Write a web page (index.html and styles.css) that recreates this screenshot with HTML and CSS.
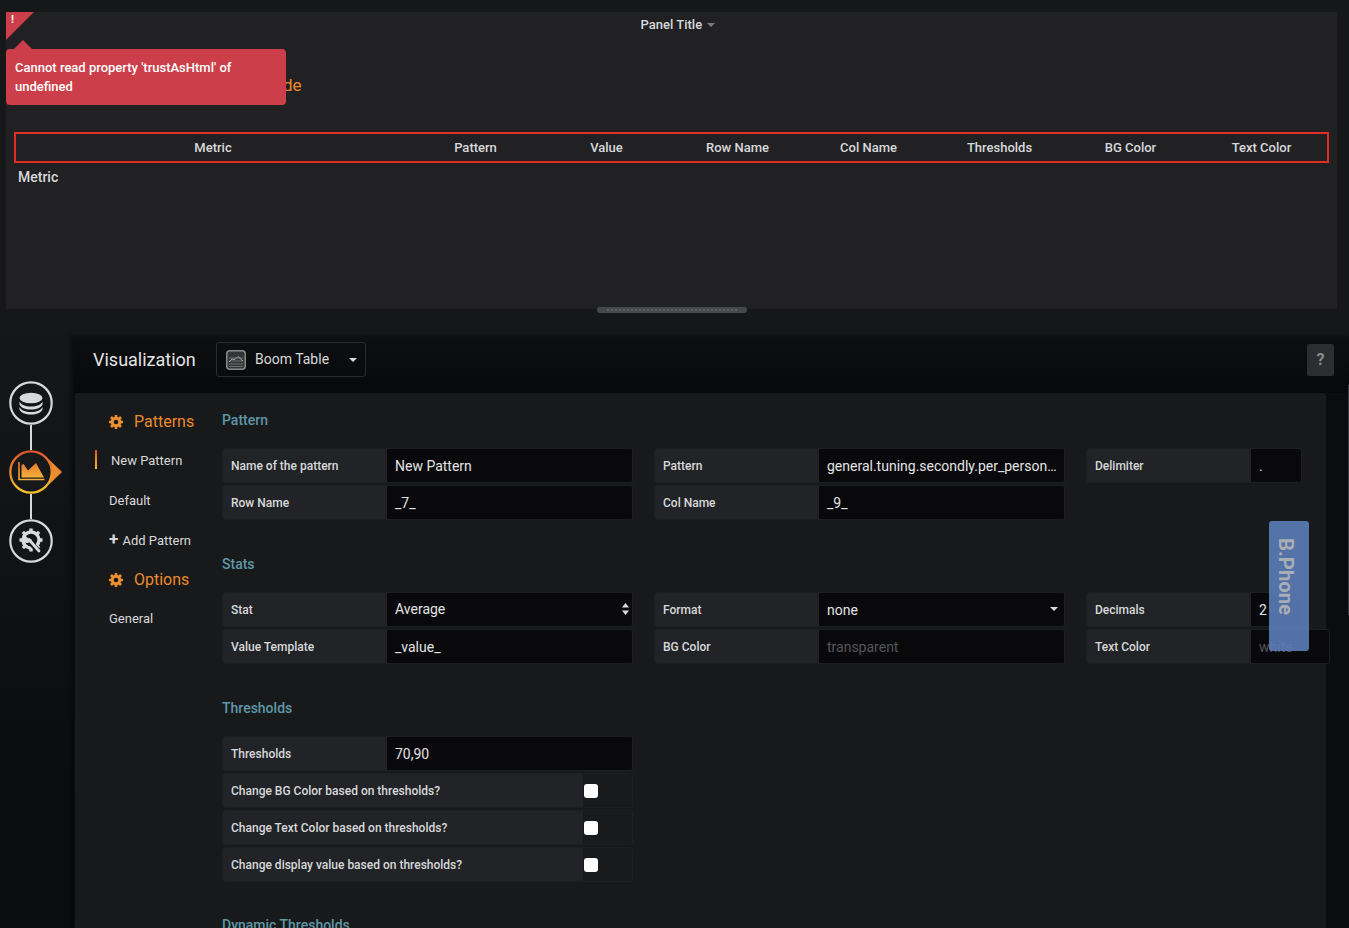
FILE: index.html
```html
<!DOCTYPE html>
<html lang="en">
<head>
<meta charset="utf-8">
<title>Boom Table</title>
<link rel="stylesheet" href="styles.css">
</head>
<body>
<div class="page">
  <section class="panel">
    <div class="corner"><span>!</span></div>
    <div class="tip">Cannot read property 'trustAsHtml' of undefined</div>
    <header class="panel-title">Panel Title <i class="caret"></i></header>
    <div class="hidden-head">de</div>
    <div class="thead">
      <div>Metric</div><div>Pattern</div><div>Value</div><div>Row Name</div><div>Col Name</div><div>Thresholds</div><div>BG Color</div><div>Text Color</div>
    </div>
    <div class="metric">Metric</div>
  </section>
  <div class="handle"></div>

  <div class="editor">
    <aside class="rail">
      <div class="step">
        <svg width="44" height="44" viewBox="0 0 44 44"><circle cx="22" cy="22" r="20.7" fill="#141517" stroke="#d8d9da" stroke-width="2.2"/><ellipse cx="22" cy="17" rx="11.5" ry="5.3" fill="#d8d9da"/><path d="M10.5 20.500c1 3 6 5 11.500 5s10.500-2 11.500-5v3c-1 3-6 5-11.500 5s-10.500-2-11.500-5zM10.500 26c1 3 6 5 11.500 5s10.500-2 11.500-5v2.500c-1 3-6 5-11.500 5s-10.500-2-11.500-5z" fill="#d8d9da"/></svg>
      </div>
      <i class="link"></i>
      <div class="step">
        <svg width="54" height="44" viewBox="0 0 54 44">
          <defs>
            <linearGradient id="ring" x1="0" y1="0" x2="0" y2="1"><stop offset="0" stop-color="#e0562a"/><stop offset="1" stop-color="#f5c32c"/></linearGradient>
            <linearGradient id="fill" x1="0" y1="0" x2="0" y2="1"><stop offset="0" stop-color="#e9792e"/><stop offset="1" stop-color="#f3b03a"/></linearGradient>
          </defs>
          <path d="M40 9.500L53 22 40 34.500z" fill="#ec8b2f"/>
          <circle cx="22" cy="22" r="20.700" fill="#17181a" stroke="url(#ring)" stroke-width="2.200"/>
          <path d="M10 12v17.500h25.500" fill="none" stroke="url(#fill)" stroke-width="1.600"/>
          <path d="M12.500 27.500V15l2-1 4.500 6.500 8-7.500 8 14.500z" fill="url(#fill)"/>
        </svg>
      </div>
      <i class="link"></i>
      <div class="step">
        <svg width="44" height="44" viewBox="0 0 44 44"><circle cx="22" cy="22" r="20.700" fill="#141517" stroke="#d8d9da" stroke-width="2.200"/><path d="M22 9.500v23M10.500 21h23M13.900 12.900l16.200 16.200M30.100 12.900L13.900 29.100" stroke="#d8d9da" stroke-width="3.400"/><circle cx="22" cy="21" r="8" fill="#141517" stroke="#d8d9da" stroke-width="3.400"/><path d="M21 23l12 13" stroke="#141517" stroke-width="5.500"/><path d="M20 20.500l10 11.500" stroke="#d8d9da" stroke-width="2.800" stroke-linecap="round"/><path d="M16.500 14.200a5 5 0 1 0 6.300 6.300l-3.300-.7-2.300-2.300z" fill="#d8d9da"/></svg>
      </div>
    </aside>

    <main class="work">
      <header class="viz-bar">
        <h1>Visualization</h1>
        <div class="viz-pick">
          <svg width="20" height="20" viewBox="0 0 20 20"><rect x=".75" y=".75" width="18.500" height="18.500" rx="3" fill="#333436" stroke="#8a8a8a" stroke-width="1.500"/><path d="M3 8h14M3 11h14M3 14h14M3 16.500h14" stroke="#6e6e6e" stroke-width="1"/><path d="M3 12l3-3 3 .5 3-3 5 4.500" fill="none" stroke="#a8a8a8" stroke-width="1"/></svg>
          <span>Boom Table</span>
          <i class="caret caret-light"></i>
        </div>
        <button class="help" type="button">?</button>
      </header>

      <div class="card">
        <nav class="side">
          <div class="side-head"><svg class="cog" width="14" height="14" viewBox="0 0 14 14"><path d="M7 0v14M0 7h14M2 2l10 10M12 2L2 12" stroke="#ec8f30" stroke-width="2.600"/><circle cx="7" cy="7" r="3.800" fill="#18191b" stroke="#ec8f30" stroke-width="3"/></svg>Patterns</div>
          <div class="side-item side-on">New Pattern</div>
          <div class="side-item">Default</div>
          <div class="side-item"><b class="plus">+</b> Add Pattern</div>
          <div class="side-head side-head-2"><svg class="cog" width="14" height="14" viewBox="0 0 14 14"><path d="M7 0v14M0 7h14M2 2l10 10M12 2L2 12" stroke="#ec8f30" stroke-width="2.600"/><circle cx="7" cy="7" r="3.800" fill="#18191b" stroke="#ec8f30" stroke-width="3"/></svg>Options</div>
          <div class="side-item">General</div>
        </nav>

        <div class="forms">
          <section class="group">
            <h2>Pattern</h2>
            <div class="row">
              <div class="fld"><label>Name of the pattern</label><div class="val">New Pattern</div></div>
              <div class="fld"><label>Pattern</label><div class="val">general.tuning.secondly.per_person_throughput</div></div>
              <div class="fld"><label>Delimiter</label><div class="val narrow">.</div></div>
            </div>
            <div class="row">
              <div class="fld"><label>Row Name</label><div class="val">_7_</div></div>
              <div class="fld"><label>Col Name</label><div class="val">_9_</div></div>
            </div>
          </section>

          <section class="group">
            <h2>Stats</h2>
            <div class="row">
              <div class="fld"><label>Stat</label><div class="val val-sel val-native">Average<svg class="updown" width="7" height="12" viewBox="0 0 7 12"><path d="M3.500 0L7 4.500H0zM3.500 12L0 7.500h7z" fill="#d8d9da"/></svg></div></div>
              <div class="fld"><label>Format</label><div class="val val-sel">none<i class="caret caret-sm"></i></div></div>
              <div class="fld"><label>Decimals</label><div class="val narrow">2</div></div>
            </div>
            <div class="row">
              <div class="fld"><label>Value Template</label><div class="val">_value_</div></div>
              <div class="fld"><label>BG Color</label><div class="val ph">transparent</div></div>
              <div class="fld"><label>Text Color</label><div class="val tc ph">white</div></div>
            </div>
          </section>

          <section class="group group-tall">
            <h2>Thresholds</h2>
            <div class="row">
              <div class="fld"><label>Thresholds</label><div class="val">70,90</div></div>
            </div>
            <div class="row"><div class="fld chk"><label>Change BG Color based on thresholds?</label><div class="box"><i></i></div></div></div>
            <div class="row"><div class="fld chk"><label>Change Text Color based on thresholds?</label><div class="box"><i></i></div></div></div>
            <div class="row"><div class="fld chk"><label>Change display value based on thresholds?</label><div class="box"><i></i></div></div></div>
          </section>

          <section class="group">
            <h2>Dynamic Thresholds</h2>
          </section>
        </div>
      </div>
    </main>
  </div>
  <div class="scroll"></div>
  <div class="bphone"><span>B.Phone</span></div>
</div>
</body>
</html>
```
FILE: styles.css
```css
* { box-sizing: border-box; }
html, body { margin: 0; height: 100%; overflow: hidden; }
body { background: #161719; color: #d8d9da; font: 400 14px Roboto, "Liberation Sans", sans-serif; }
.page { position: relative; height: 928px; overflow: hidden; padding-top: 12px; background: linear-gradient(#161719 0, #161719 309px, #141517 420px, #0b0c0e 800px, #0b0c0e 100%); }

.panel { position: relative; width: 1331px; height: 297px; margin-left: 6px; background: #212124; padding: 0 8px; }
.panel-title { height: 27px; padding: 5px 0 0 13px; text-align: center; font-weight: 500; font-size: 13px; line-height: 16px; }
.caret { display: inline-block; width: 0; height: 0; margin-left: 2px; vertical-align: 2px; border: 4.500px solid transparent; border-top-color: #7b7b7e; border-bottom: 0; }
.corner { position: absolute; left: 0; top: 0; width: 28px; height: 28px; background: #cc3f4a; clip-path: polygon(0 0, 100% 0, 0 100%); }
.corner span { position: absolute; left: 5px; top: 1px; color: #fff; font-weight: 700; font-size: 11px; line-height: 14px; }
.tip { position: absolute; z-index: 2; left: 0; top: 37px; width: 280px; height: 56px; padding: 9px 9px; background: #cc3f4a; color: #fff; border-radius: 4px; font-size: 13px; font-weight: 500; line-height: 19px; }
.tip::before { content: ""; position: absolute; left: 8px; top: -9px; border: 9px solid transparent; border-top: 0; border-bottom-color: #cc3f4a; }
.hidden-head { height: 93px; padding: 32px 0 0 269px; color: #eb8a2b; font-size: 17px; line-height: 28px; font-weight: 400; }
.thead { display: grid; grid-template-columns: 394px repeat(7, 1fr); height: 31px; width: 1315px; border: 2px solid #e02f22; font-size: 13px; font-weight: 500; line-height: 27px; text-align: center; color: #d8d9da; }
.metric { padding: 5px 4px 0; font-weight: 500; font-size: 14px; line-height: 18px; }

.handle { position: absolute; left: 597px; top: 307px; width: 150px; height: 6px; border-radius: 3px; background: #47484b; }
.handle::after { content: ""; position: absolute; left: 10px; right: 10px; top: 2px; height: 2px; background: repeating-linear-gradient(90deg, #616266 0 2px, transparent 2px 4px); }

.editor { display: flex; padding-top: 27px; height: 619px; }
.rail { width: 74px; flex: none; padding: 45px 0 0 9px; display: flex; flex-direction: column; }
.step { height: 44px; width: 54px; line-height: 0; }
.link { display: block; width: 2px; height: 25px; margin-left: 21px; background: #d8d9da; }
.work { flex: 1; min-width: 0; background: #0b0c0e; box-shadow: -3px 0 5px rgba(0, 0, 0, .45); }
.viz-bar { display: flex; align-items: center; height: 57px; padding: 0 15px 10px 19px; background: linear-gradient(#0e0f11, #070809); }
.viz-bar h1 { margin: 0 20px 0 0; font-size: 18px; font-weight: 400; color: #e3e4e5; width: 103px; white-space: nowrap; }
.viz-pick { display: flex; align-items: center; width: 150px; height: 35px; padding: 0 8px 0 9px; border: 1px solid #2a2b2e; border-radius: 3px; font-size: 14px; color: #d8d9da; }
.viz-pick span { margin-left: 9px; padding-bottom: 2px; flex: 1; }
.caret-light { border-top-color: #d8d9da; margin: 0; vertical-align: 0; }
.help { margin-left: auto; width: 27px; height: 32px; padding: 0; background: #2c2d2f; border: 0; border-radius: 2px; color: #8a8b8d; font: 700 16px Roboto, sans-serif; }

.card { display: flex; width: 1251px; margin-left: 1px; height: 540px; background: #18191b; border-radius: 3px 3px 0 0; padding: 0 0 0 20px; }
.side { width: 127px; flex: none; padding-top: 19px; }
.side-head { display: flex; align-items: center; height: 20px; padding-left: 14px; color: #eb8a2b; font-size: 16px; line-height: 20px; }
.cog { margin-right: 11px; flex: none; }
.side-item { height: 40px; padding-left: 14px; line-height: 17px; padding-top: 11px; font-size: 13px; }
.side-head + .side-item { margin-top: 9px; }
.side-on { position: relative; padding-left: 16px; }
.side-on::before { content: ""; position: absolute; left: 0; top: 9px; width: 2px; height: 19px; background: linear-gradient(#e0562a, #f5c32c); }
.plus { margin-right: 1px; font-size: 17px; font-weight: 700; line-height: 14px; }
.side-head-2 { margin-top: 9px; }

.forms { flex: 1; min-width: 0; padding-top: 18px; }
.group { height: 144px; }
.group-tall { height: 217px; }
.group h2 { margin: 0 0 19px; font-size: 14px; line-height: 18px; font-weight: 500; color: #5f97a6; white-space: nowrap; }
.row { display: flex; gap: 21px; margin-bottom: 2px; }
.fld { display: flex; height: 35px; flex: none; border: 1px solid #1e1f21; border-radius: 3px; overflow: hidden; }
.fld label { flex: none; width: 164px; padding-left: 8px; background: #222327; font-size: 12px; font-weight: 500; line-height: 35px; color: #d8d9da; }
.val { position: relative; width: 245px; padding: 0 5px 0 8px; background: #09090b; color: #e3e4e5; font-size: 14px; line-height: 35px; white-space: nowrap; overflow: hidden; text-overflow: ellipsis; }
.narrow { width: 50px; }
.tc { width: 78px; }
.ph { color: #55565a; }
.val-sel { padding-right: 18px; }
.val-native { line-height: 33px; }
.caret-sm { position: absolute; right: 6px; top: 14px; margin: 0; border-width: 4px; border-bottom: 0; border-top-color: #d8d9da; }
.updown { position: absolute; right: 3px; top: 10px; }
.chk { width: 411px; }
.chk label { width: 360px; }
.box { flex: 1; background: #191a1c; display: flex; align-items: center; padding-left: 1px; }
.box i { display: block; width: 14px; height: 14px; border-radius: 3px; background: #fff; }

.scroll { position: absolute; right: 0; top: 385px; width: 1px; height: 230px; background: #3a3a44; }
.bphone { position: absolute; left: 1269px; top: 521px; width: 40px; height: 130px; background: rgba(91, 125, 184, .9); border-radius: 3px; padding: 17px 0 0 5px; }
.bphone span { display: block; writing-mode: vertical-rl; font-size: 20.300px; font-weight: 700; line-height: 24px; color: #a9adb5; white-space: nowrap; }
```
